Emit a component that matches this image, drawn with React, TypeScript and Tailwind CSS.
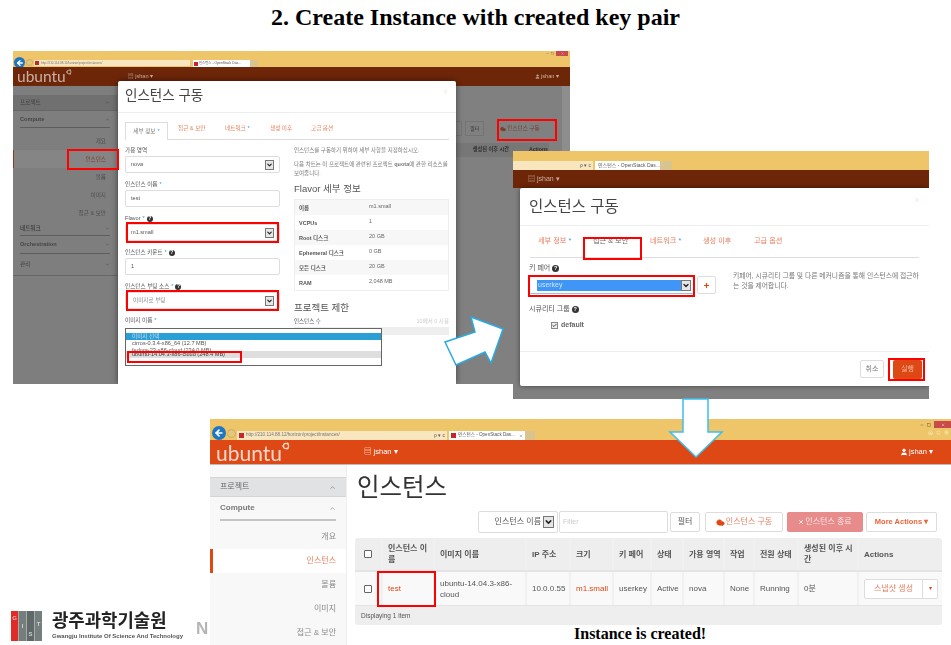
import React from "react";
import { ArrowLeft, ChevronDown, ChevronUp, Check, Plus, X, User, Cloud, Minus, Square, Home, Star, Settings } from "lucide-react";

const FONT = "font-['Liberation_Sans','Noto_Sans_CJK_KR',sans-serif]";

const RedBox = ({ className }: { className: string }) => (
  <div className={"absolute border-2 border-[#f00] z-20 " + className} />
);

const UbuntuMark = ({ className }: { className: string }) => (
  <svg viewBox="0 0 20 20" className={className} fill="none">
    <circle cx="10" cy="10" r="6.5" stroke="currentColor" strokeWidth="3" />
    <circle cx="3" cy="10" r="2.4" fill="currentColor" />
    <circle cx="14" cy="3.5" r="2.4" fill="currentColor" />
    <circle cx="14" cy="16.5" r="2.4" fill="currentColor" />
  </svg>
);

const Hint = ({ className = "w-[6px] h-[6px] text-[5px]" }: { className?: string }) => (
  <span className={"inline-flex items-center justify-center rounded-full bg-[#333] text-white font-bold ml-[2px] " + className}>?</span>
);

const Arrow = ({ className = "w-[9px] h-[10px]" }: { className?: string }) => (
  <span className={"flex items-center justify-center bg-[#e6e6e6] border border-[#777] shrink-0 " + className}>
    <ChevronDown className="w-full h-full text-[#222]" strokeWidth={4} />
  </span>
);

const Field = ({ label, children }: { label: React.ReactNode; children: React.ReactNode }) => (
  <div className="flex flex-col">
    <div className="h-[11px] flex items-center text-[5.6px] text-[#555]">{label}</div>
    <div className="h-[17px] mb-[6px] border border-[#ddd] rounded-[2px] flex items-center justify-between px-[5px] text-[5.6px] text-[#555] bg-white">
      {children}
    </div>
  </div>
);

const star = <span className="text-[#2a9fd6] ml-[2px]">*</span>;

const SideRow1 = ({ text, active }: { text: string; active?: boolean }) => (
  <div className={"h-[18px] flex items-center justify-end pr-[11px] text-[5.6px] " + (active ? "bg-[#858585] border-l border-[#8a3a20] text-[#7a3f2b]" : "text-[#4d4d4d]")}>
    {text}
  </div>
);

const SideHead1 = ({ text, h, up }: { text: string; h: string; up?: boolean }) => (
  <div className={"mx-[7px] border-b border-[#5d5d5d] flex items-center justify-between text-[5.6px] font-bold text-[#454545] " + h}>
    {text}
    {up ? <ChevronUp className="w-[5px] h-[5px]" /> : <ChevronDown className="w-[5px] h-[5px]" />}
  </div>
);

const flavorRows = [
  ["이름", "m1.small"],
  ["VCPUs", "1"],
  ["Root 디스크", "20 GB"],
  ["Ephemeral 디스크", "0 GB"],
  ["모든 디스크", "20 GB"],
  ["RAM", "2,048 MB"],
];

function FirstShot() {
  return (
    <div className="absolute left-[13px] top-[51px] w-[557px] h-[333px] overflow-hidden flex flex-col bg-[#808080] blur-[0.5px]">
      <div className="h-[16px] bg-[#eec568] flex items-end shrink-0 pl-[1px]">
        <span className="w-[11px] h-[11px] rounded-full bg-[#1f76c0] flex items-center justify-center text-white mb-[-1px]">
          <ArrowLeft className="w-[8px] h-[8px]" strokeWidth={4} />
        </span>
        <span className="w-[7px] h-[7px] rounded-full bg-[#e8c878] border border-[#c9ad66] ml-[1px] mb-[1px]" />
        <div className="w-[156px] h-[6px] bg-[#f8e6bf] ml-[1px] mb-[1px] flex items-center px-[1px] text-[3px] text-[#777]">
          <span className="w-[4px] h-[4px] bg-[#c8242c] mr-[2px]" />http://210.114.88.12/horizon/project/instances/
        </div>
        <div className="w-[57px] h-[7px] bg-white ml-[3px] flex items-center px-[1px] text-[3.4px] text-[#555] whitespace-nowrap">
          <span className="w-[4px] h-[4px] bg-[#c8242c] mr-[1px]" />인스턴스 - OpenStack Das...
        </div>
        <div className="w-[8px] h-[7px] bg-[#d9c48f]" />
        <div className="ml-auto mr-[2px] self-start flex items-center gap-[2px] text-[#555]">
          <Minus className="w-[3px] h-[3px]" />
          <Square className="w-[3px] h-[3px]" />
          <span className="w-[12px] h-[5px] bg-[#c84a4a] flex items-center justify-center text-white">
            <X className="w-[3px] h-[3px]" />
          </span>
        </div>
      </div>
      <div className="h-[19px] bg-[#6e2609] flex items-center shrink-0 text-[#c9b0a5]">
        <div className="w-[105px] pl-[4px] flex items-start leading-none">
          <span className="font-['Lato',sans-serif] text-[15.5px]">ubuntu</span>
          <UbuntuMark className="w-[6px] h-[6px]" />
        </div>
        <span className="ml-[10px] text-[5.6px]">▤ jshan ▾</span>
        <span className="ml-auto mr-[11px] text-[5.6px] flex items-center gap-[1px]">
          <User className="w-[5px] h-[5px] fill-current" />jshan ▾
        </span>
      </div>
      <div className="flex-1 flex min-h-0">
        <div className="w-[105px] shrink-0 pt-[9px] bg-[#7e7e7e] border-r border-[#777]">
          <div className="h-[16px] bg-[#707070] flex items-center justify-between px-[7px] text-[5.6px] text-[#3e3e3e] border-b border-[#666]">
            프로젝트
            <ChevronUp className="w-[5px] h-[5px]" />
          </div>
          <SideHead1 text="Compute" h="h-[17px]" up />
          <div className="h-[4px]" />
          <SideRow1 text="개요" />
          <SideRow1 text="인스턴스" active />
          <SideRow1 text="볼륨" />
          <SideRow1 text="이미지" />
          <SideRow1 text="접근 & 보안" />
          <SideHead1 text="네트워크" h="h-[14px]" />
          <SideHead1 text="Orchestration" h="h-[18px]" />
          <div className="h-[22px] border-b border-[#666] flex items-center justify-between px-[7px] text-[5.6px] text-[#3e3e3e]">
            관리
            <ChevronDown className="w-[5px] h-[5px]" />
          </div>
        </div>
        <div className="flex-1 min-w-0 flex flex-col items-end pt-[35px] pr-[13px]">
          <div className="flex items-center">
            <div className="w-[14px] h-[15px] border border-[#747474]" />
            <div className="w-[19px] h-[15px] ml-[3px] border border-[#747474] text-[5px] text-[#333] flex items-center justify-center">필터</div>
            <div className="w-[58px] h-[15px] ml-[7px] flex items-center justify-center gap-[1px] text-[5.6px] text-[#7a3f2b]">
              <Cloud className="w-[6px] h-[6px] fill-current" />인스턴스 구동
            </div>
          </div>
          <div className="mt-[7px] w-[101px] h-[14px] bg-[#777] flex items-center justify-end gap-[20px] pr-[1px] text-[5.2px] font-bold text-[#2e2e2e]">
            <span>생성된 이후 시간</span>
            <span>Actions</span>
          </div>
        </div>
        <div className="w-[8px] shrink-0 bg-[#8d8d8d]" />
      </div>

      {/* modal */}
      <div className="absolute left-[105px] top-[30px] w-[338px] h-[303px] bg-white rounded-t-[2px] shadow-[0_0_6px_rgba(0,0,0,0.5)] flex flex-col">
        <div className="h-[32px] border-b border-[#eee] shrink-0 flex items-center justify-between px-[7px]">
          <span className="text-[13.5px] text-[#444]">인스턴스 구동</span>
          <X className="w-[5px] h-[5px] text-[#f3d0c5] self-start mt-[8px] mr-[1px]" />
        </div>
        <div className="h-[27px] mx-[7px] border-b border-[#ddd] flex items-end shrink-0 text-[5.6px] text-[#e8805f]">
          <div className="w-[43px] h-[18px] border border-b-0 border-[#ddd] bg-white flex items-center justify-center text-[#777] mb-[-1px]">세부 정보{star}</div>
          <span className="ml-[10px] mb-[7px] w-[37px]">접근 &amp; 보안</span>
          <span className="ml-[10px] mb-[7px] w-[35px]">네트워크{star}</span>
          <span className="ml-[10px] mb-[7px] w-[31px]">생성 이후</span>
          <span className="ml-[10px] mb-[7px]">고급 옵션</span>
        </div>
        <div className="flex pl-[7px] pt-[5px]">
          <div className="w-[155px] shrink-0">
            <Field label="가용 영역">nova<Arrow /></Field>
            <Field label={<>인스턴스 이름{star}</>}>test</Field>
            <Field label={<>Flavor{star}<Hint /></>}>m1.small<Arrow /></Field>
            <Field label={<>인스턴스 카운트{star}<Hint /></>}>1</Field>
            <Field label={<>인스턴스 부팅 소스{star}<Hint /></>}><span className="pl-[2px] text-[#888]">이미지로 부팅</span><Arrow /></Field>
            <div className="h-[11px] flex items-center text-[5.6px] text-[#555]">이미지 이름{star}</div>
          </div>
          <div className="ml-[14px] w-[155px] flex flex-col text-[5.5px] text-[#777]">
            <p className="mt-[1px] whitespace-nowrap">인스턴스를 구동하기 위하여 세부 사항을 지정하십시오.</p>
            <p className="mt-[6px] leading-[9px]">다음 차트는 이 프로젝트에 관련된 프로젝트 <b>quota</b>에 관한 리소스를 보여줍니다.</p>
            <h4 className="mt-[4px] text-[9.5px] text-[#555] leading-[14px]">Flavor 세부 정보</h4>
            <div className="mt-[3px] border border-[#eee]">
              {flavorRows.map(([k, v], i) => (
                <div key={k} className={"h-[15px] flex items-start pt-[2px] pl-[4px] " + (i % 2 === 0 ? "bg-[#f7f7f7]" : "bg-white")}>
                  <b className="w-[70px] text-[#555] mt-[2px]">{k}</b>
                  <span className="text-[#666]">{v}</span>
                </div>
              ))}
            </div>
            <h4 className="mt-[10px] text-[9.5px] text-[#555] leading-[14px]">프로젝트 제한</h4>
            <div className="mt-[2px] flex justify-between"><b className="text-[#555] font-normal">인스턴스 수</b><span className="text-[#ccc]">10메서 0 사용</span></div>
            <div className="mt-[1px] h-[8px] bg-[#eee]" />
          </div>
        </div>
      </div>

      {/* open dropdown list */}
      <div className="absolute left-[112px] top-[277px] w-[257px] h-[38px] bg-white border border-[#666] z-10 flex flex-col pt-[4px] text-[5.6px] text-[#555] leading-[7px]">
        <div className="h-[7px] bg-[#2a9fd6] text-[#cde] pl-[6px]">이미지 선택</div>
        <div className="h-[7px] pl-[6px] whitespace-nowrap">cirros-0.3.4-x86_64 (12.7 MB)</div>
        <div className="h-[4px] pl-[6px] whitespace-nowrap overflow-hidden">fedora-23-x86-cloud (234.0 MB)</div>
        <div className="h-[7px] bg-[#dedede] pl-[6px] whitespace-nowrap text-[#333]">ubuntu-14.04.3-x86-cloud (248.4 MB)</div>
      </div>

      <RedBox className="left-[54px] top-[98px] w-[52px] h-[21px]" />
      <RedBox className="left-[113px] top-[171px] w-[153px] h-[21px]" />
      <RedBox className="left-[113px] top-[239px] w-[153px] h-[21px]" />
      <RedBox className="left-[114px] top-[300px] w-[115px] h-[12px]" />
      <RedBox className="left-[484px] top-[68px] w-[60px] h-[22px]" />
    </div>
  );
}

function SecondShot() {
  return (
    <div className="absolute left-[513px] top-[151px] w-[416px] h-[248px] overflow-hidden flex flex-col bg-[#808080] blur-[0.5px]">
      <div className="h-[19px] bg-[#eec568] flex items-end shrink-0 text-[5px] text-[#555]">
        <div className="w-[80px] h-[9px] bg-[#f8e6bf] flex items-center justify-end pr-[2px] gap-[2px]">ρ ▾ c</div>
        <div className="w-[65px] h-[9px] bg-white ml-[2px] flex items-center px-[2px] whitespace-nowrap">
          <span className="w-[5px] h-[5px] bg-[#c8242c] mr-[1px]" />인스턴스 - OpenStack Das...
        </div>
        <div className="w-[12px] h-[9px] bg-[#d9c48f]" />
      </div>
      <div className="h-[18px] bg-[#6e2609] shrink-0 flex items-center pl-[15px] text-[7px] text-[#c9b0a5]">▤ jshan ▾</div>

      <div className="absolute left-[7px] top-[37px] w-[409px] h-[198px] bg-white rounded-l-[2px] shadow-[0_0_5px_rgba(0,0,0,0.5)] flex flex-col">
        <div className="h-[38px] border-b border-[#eee] shrink-0 flex items-center justify-between pl-[9px]">
          <span className="text-[15.5px] text-[#444]">인스턴스 구동</span>
          <X className="w-[6px] h-[6px] text-[#f3d0c5] self-start mt-[9px] mr-[9px]" />
        </div>
        <div className="h-[32px] mx-[10px] border-b border-[#ddd] shrink-0 flex items-center text-[7.2px] text-[#e8805f]">
          <span className="ml-[8px] w-[36px] whitespace-nowrap">세부 정보{star}</span>
          <span className="ml-[19px] w-[38px] whitespace-nowrap text-[#666]">접근 &amp; 보안</span>
          <span className="ml-[19px] w-[35px] whitespace-nowrap">네트워크{star}</span>
          <span className="ml-[18px] w-[32px] whitespace-nowrap">생성 이후</span>
          <span className="ml-[19px] whitespace-nowrap">고급 옵션</span>
        </div>
        <div className="flex flex-1 pl-[9px] min-h-0">
          <div className="w-[187px] shrink-0 flex flex-col text-[7px] text-[#555]">
            <div className="mt-[6px] h-[9px] flex items-center">키 페어<Hint className="w-[7px] h-[7px] text-[5.5px]" /></div>
            <div className="mt-[3px] flex items-center">
              <div className="w-[165px] h-[18px] border border-[#8fc2ee] rounded-[2px] flex items-center pl-[7px] pr-[2px]">
                <span className="flex-1 h-[11px] bg-[#3f96f6] text-[#cfe4fb] flex items-center pl-[1px]">userkey</span>
                <Arrow className="w-[10px] h-[11px]" />
              </div>
              <div className="w-[19px] h-[18px] ml-[3px] border border-[#ddd] rounded-[2px] flex items-center justify-center">
                <Plus className="w-[7px] h-[7px] text-[#dd4814]" strokeWidth={4} />
              </div>
            </div>
            <div className="mt-[11px] h-[9px] flex items-center">시큐리티 그룹<Hint className="w-[7px] h-[7px] text-[5.5px]" /></div>
            <div className="mt-[6px] ml-[22px] flex items-center font-bold text-[#666]">
              <span className="w-[7px] h-[7px] border border-[#888] bg-[#eee] flex items-center justify-center mr-[3px]">
                <Check className="w-[7px] h-[7px] text-[#222]" strokeWidth={4} />
              </span>
              default
            </div>
          </div>
          <p className="ml-[17px] mt-[13px] w-[189px] text-[6.8px] leading-[10px] text-[#777]">
            키페어, 시큐리티 그룹 및 다른 메커니즘을 통해 인스턴스에 접근하는 것을 제어합니다.
          </p>
        </div>
        <div className="h-[35px] border-t border-[#eee] shrink-0 flex items-center justify-end pr-[7px] text-[7px]">
          <div className="w-[24px] h-[18px] border border-[#ddd] rounded-[2px] flex items-center justify-center text-[#777]">취소</div>
          <div className="w-[29px] h-[19px] ml-[9px] bg-[#dd4814] rounded-[2px] flex items-center justify-center text-[#f3b9a5]">실행</div>
        </div>
      </div>

      <RedBox className="left-[70px] top-[86px] w-[59px] h-[23px]" />
      <RedBox className="left-[15px] top-[124px] w-[167px] h-[22px]" />
      <RedBox className="left-[375px] top-[207px] w-[37px] h-[23px]" />
    </div>
  );
}

const colsTemplate = "grid grid-cols-[26px_52px_92px_44px_43px_38px_32px_41px_30px_44px_60px_85px]";

const headers = ["인스턴스 이름", "이미지 이름", "IP 주소", "크기", "키 페어", "상태", "가용 영역", "작업", "전원 상태", "생성된 이후 시간", "Actions"];

const SideRow3 = ({ text, active }: { text: string; active?: boolean }) => (
  <div className={"h-[24px] flex items-center justify-end pr-[10px] text-[8px] " + (active ? "bg-white border-l-[3px] border-[#dd4814] text-[#e8805f]" : "text-[#8a8a8a]")}>
    {text}
  </div>
);

const Cell = ({ children, className = "" }: { children?: React.ReactNode; className?: string }) => (
  <div className={"flex items-center pl-[5px] pr-[2px] border-l-2 border-[#f1f1f1] leading-[11px] " + className}>{children}</div>
);

const Box = () => <span className="w-[8px] h-[8px] border border-[#666] bg-white rounded-[1px]" />;

function ThirdShot() {
  return (
    <div className="absolute left-[210px] top-[419px] w-[741px] h-[226px] overflow-hidden flex flex-col bg-white blur-[0.4px]">
      <div className="h-[21px] bg-[#eec568] flex items-end shrink-0 pl-[2px]">
        <span className="w-[14px] h-[14px] rounded-full bg-[#1f76c0] flex items-center justify-center text-white">
          <ArrowLeft className="w-[10px] h-[10px]" strokeWidth={4} />
        </span>
        <span className="w-[9px] h-[9px] rounded-full bg-[#e8c878] border border-[#c9ad66] ml-[1px] mb-[2px]" />
        <div className="w-[210px] h-[9px] bg-[#f8e6bf] ml-[1px] flex items-center px-[2px] text-[4.6px] text-[#777]">
          <span className="w-[5px] h-[5px] bg-[#c8242c] mr-[2px]" />http://210.114.88.12/horizon/project/instances/
          <span className="ml-auto text-[#555] text-[5px]">ρ ▾ c</span>
        </div>
        <div className="w-[76px] h-[9px] bg-white ml-[2px] flex items-center px-[2px] text-[4.6px] text-[#555] whitespace-nowrap">
          <span className="w-[5px] h-[5px] bg-[#c8242c] mr-[2px]" />인스턴스 - OpenStack Das...
          <X className="ml-auto w-[4px] h-[4px]" />
        </div>
        <div className="w-[10px] h-[9px] bg-[#d9c48f]" />
        <div className="ml-auto self-stretch w-[36px] flex flex-col items-end pt-[2px]">
          <div className="flex items-center gap-[3px] text-[#444]">
            <Minus className="w-[4px] h-[4px]" />
            <Square className="w-[4px] h-[4px]" />
            <span className="w-[17px] h-[7px] bg-[#c84a4a] flex items-center justify-center text-white">
              <X className="w-[4px] h-[4px]" />
            </span>
          </div>
          <div className="mt-[2px] mr-[2px] flex items-center gap-[3px] text-[#fff6e0]">
            <Home className="w-[5px] h-[5px]" />
            <Star className="w-[5px] h-[5px]" />
            <Settings className="w-[5px] h-[5px]" />
          </div>
        </div>
      </div>
      <div className="h-[25px] bg-[#dd4814] border-b border-[#bbb] flex items-center shrink-0 text-white">
        <div className="w-[154px] pl-[6px] flex items-start">
          <span className="font-['Lato',sans-serif] text-[21px] leading-[21px] text-[#f7d8cc]">ubuntu</span>
          <UbuntuMark className="w-[8px] h-[8px] text-[#f7d8cc]" />
        </div>
        <span className="text-[7.5px]">▤ jshan ▾</span>
        <span className="ml-auto mr-[18px] text-[7.5px] flex items-center gap-[1px]">
          <User className="w-[8px] h-[8px] fill-current" />jshan ▾
        </span>
      </div>
      <div className="flex-1 flex min-h-0">
        <div className="w-[137px] shrink-0 bg-[#f8f8f8] border-r border-[#eee] pt-[12px]">
          <div className="h-[20px] bg-[#e1e2e3] border-y border-[#d5d5d5] flex items-center justify-between px-[10px] text-[8px] text-[#666]">
            프로젝트
            <ChevronUp className="w-[7px] h-[7px]" />
          </div>
          <div className="mx-[10px] h-[24px] border-b-2 border-[#c5c5c5] flex items-center justify-between text-[8px] font-bold text-[#777]">
            Compute
            <ChevronUp className="w-[7px] h-[7px]" />
          </div>
          <div className="h-[4px]" />
          <SideRow3 text="개요" />
          <SideRow3 text="인스턴스" active />
          <SideRow3 text="볼륨" />
          <SideRow3 text="이미지" />
          <SideRow3 text="접근 & 보안" />
        </div>
        <div className="flex-1 min-w-0 pl-[8px]">
          <div className="h-[46px] flex items-center">
            <span className="text-[24.5px] text-[#333] ml-[2px]">인스턴스</span>
          </div>
          <div className="h-[22px] flex items-center text-[8px]">
            <div className="ml-[123px] w-[80px] h-[22px] border border-[#ddd] rounded-[2px] flex items-center justify-end pr-[3px] gap-[2px] text-[#555]">
              인스턴스 이름<Arrow className="w-[11px] h-[12px]" />
            </div>
            <div className="ml-[1px] w-[109px] h-[22px] border border-[#ddd] rounded-[2px] flex items-center pl-[3px] text-[#ccc] text-[7px]">Filter</div>
            <div className="ml-[2px] w-[30px] h-[20px] border border-[#ddd] rounded-[2px] flex items-center justify-center text-[#555]">필터</div>
            <div className="ml-[5px] w-[78px] h-[20px] border border-[#ddd] rounded-[2px] flex items-center justify-center gap-[1px] text-[#e8805f]">
              <Cloud className="w-[9px] h-[9px] text-[#dd4814] fill-current" />인스턴스 구동
            </div>
            <div className="ml-[4px] w-[76px] h-[20px] bg-[#e78b8b] rounded-[2px] flex items-center justify-center gap-[1px] text-[#fbe5e5]">
              <X className="w-[6px] h-[6px]" strokeWidth={4} />인스턴스 종료
            </div>
            <div className="ml-[3px] w-[71px] h-[20px] border border-[#ddd] rounded-[2px] flex items-center justify-center text-[#e8653a] font-bold text-[7.5px] whitespace-nowrap">More Actions ▾</div>
          </div>
          <div className="mt-[5px] w-[587px] rounded-[3px] overflow-hidden text-[8px] text-[#555]">
            <div className={colsTemplate + " h-[34px] bg-[#eeeeee] font-bold border-b-2 border-[#e4e4e4]"}>
              <div className="flex items-center justify-center"><Box /></div>
              {headers.map((h) => <Cell key={h} className="border-[#e8e8e8]">{h}</Cell>)}
            </div>
            <div className={colsTemplate + " h-[33px] bg-[#f9f9f9]"}>
              <div className="flex items-center justify-center"><Box /></div>
              <Cell className="text-[#dd4814]">test</Cell>
              <Cell>ubuntu-14.04.3-x86-cloud</Cell>
              <Cell>10.0.0.55</Cell>
              <Cell className="text-[#dd4814]">m1.small</Cell>
              <Cell>userkey</Cell>
              <Cell>Active</Cell>
              <Cell>nova</Cell>
              <Cell>None</Cell>
              <Cell>Running</Cell>
              <Cell>0분</Cell>
              <Cell>
                <div className="w-[59px] h-[20px] border border-[#ddd] bg-white rounded-l-[2px] flex items-center justify-center text-[#e8805f]">스냅샷 생성</div>
                <div className="w-[15px] h-[20px] border border-l-0 border-[#ddd] bg-white rounded-r-[2px] flex items-center justify-center text-[#dd4814] text-[6px]">▾</div>
              </Cell>
            </div>
            <div className="h-[20px] bg-[#eeeeee] border-t border-[#e4e4e4] flex items-center pl-[6px] text-[6.5px]">Displaying 1 item</div>
          </div>
        </div>
      </div>
      <RedBox className="left-[167px] top-[152px] w-[59px] h-[36px]" />
    </div>
  );
}

function GistLogo() {
  return (
    <div className="absolute left-[11px] top-[611px] flex blur-[0.5px]">
      <div className="w-[31px] h-[30px] flex text-[6px] text-[#cfd3d3] font-bold">
        <div className="w-[7px] bg-[#e02b27] flex justify-center pt-[3px] text-[#f5b5b0]">G</div>
        <div className="w-[8px] bg-[#747e7c] flex justify-center pt-[11px] border-l border-[#aaa]">I</div>
        <div className="w-[8px] bg-[#5f6a68] flex justify-center items-end pb-[2px] border-l border-[#aaa]">S</div>
        <div className="w-[8px] bg-[#747e7c] flex justify-center pt-[9px] border-l border-[#aaa]">T</div>
      </div>
      <div className="ml-[10px] flex flex-col text-[#222]">
        <span className="text-[17.8px] font-bold leading-[20px] whitespace-nowrap">광주과학기술원</span>
        <span className="mt-[1px] text-[6px] font-bold leading-[8px] text-[#555] whitespace-nowrap">Gwangju Institute Of Science And Technology</span>
      </div>
    </div>
  );
}

export default function App() {
  return (
    <div className={"relative w-[951px] h-[645px] overflow-hidden bg-white " + FONT}>
      <h1 className="pt-[3px] text-center text-[24px] leading-[28px] font-bold text-black font-['Liberation_Serif',serif]">
        2. Create Instance with created key pair
      </h1>
      <FirstShot />
      <SecondShot />
      <GistLogo />
      <span className="absolute left-[196px] top-[616px] text-[17px] font-bold text-[#b5b5b5] blur-[0.5px]">N</span>
      <ThirdShot />
      <svg className="absolute left-[440px] top-[312px] w-[70px] h-[58px]" viewBox="440 312 70 58">
        <polygon points="445,342 456,365 485,352 491,363 503,329 471,317 475,332" fill="#fff" stroke="#29abe2" strokeWidth="1.5" />
      </svg>
      <svg className="absolute left-[665px] top-[395px] w-[62px] h-[66px]" viewBox="665 395 62 66">
        <polygon points="683,399 708,399 708,432 722,432 696,457 670,432 683,432" fill="#fff" stroke="#3cc0ee" strokeWidth="1.5" />
      </svg>
      <span className="absolute left-[574px] top-[624px] text-[16px] leading-[20px] font-bold text-black font-['Liberation_Serif',serif] whitespace-nowrap">
        Instance is created!
      </span>
    </div>
  );
}
